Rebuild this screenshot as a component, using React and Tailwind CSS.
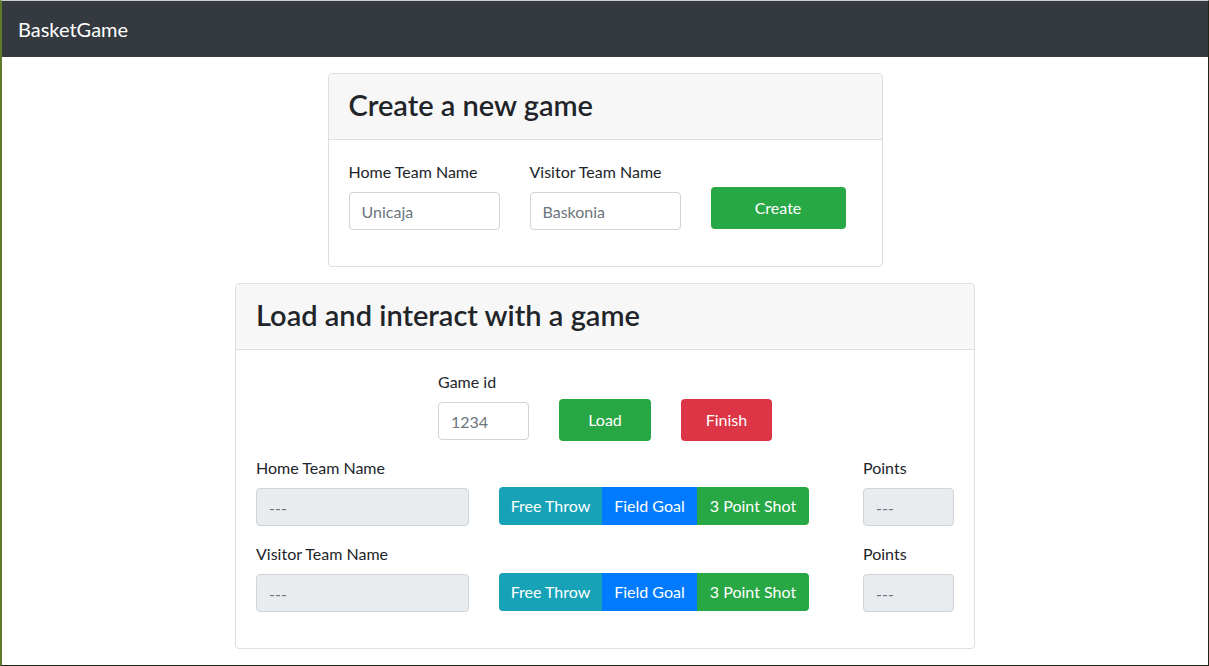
import React from 'react'

const FONT = { fontFamily: 'Lato, "Noto Sans", Arial, sans-serif' }

function Field({ label, placeholder, width, disabled }) {
  return (
    <div className="flex flex-col" style={{ width }}>
      <label className="mb-2 text-[16px] leading-6 text-[#212529]">{label}</label>
      <input
        disabled={disabled}
        placeholder={placeholder}
        className={
          'h-[38px] w-full rounded-[4px] border border-[#ced4da] px-3 text-[16px] outline-none placeholder:text-[#6c757d] ' +
          (disabled ? 'bg-[#e9ecef]' : 'bg-white')
        }
      />
    </div>
  )
}

function Card({ title, width, children }) {
  return (
    <div className="flex flex-col rounded-[4px] border border-[#dfdfdf] bg-white" style={{ width }}>
      <div className="rounded-t-[4px] border-b border-[#dfdfdf] bg-[#f7f7f7] px-5 pt-[14px] pb-[18px]">
        <h3 className="text-[29px] font-semibold leading-[33px] text-[#212529]">{title}</h3>
      </div>
      <div className="p-5">{children}</div>
    </div>
  )
}

function ShotGroup() {
  return (
    <div className="mt-[31px] flex h-[38px] text-[16px] text-white">
      <button className="w-[103px] rounded-l-[4px] bg-[#17a2b8]">Free Throw</button>
      <button className="w-[95px] bg-[#007bff]">Field Goal</button>
      <button className="w-[112px] rounded-r-[4px] bg-[#28a745]">3 Point Shot</button>
    </div>
  )
}

function TeamRow({ label }) {
  return (
    <div className="mb-4 flex">
      <Field label={label} placeholder="---" width={213} disabled />
      <div className="ml-[30px]">
        <ShotGroup />
      </div>
      <div className="ml-[54px]">
        <Field label="Points" placeholder="---" width={91} disabled />
      </div>
    </div>
  )
}

export default function App() {
  return (
    <div
      className="flex h-[666px] w-[1209px] flex-col overflow-hidden border-t border-r border-b border-l-2 border-t-[#cdcdcd] border-r-[#1e2418] border-b-[#1e2418] border-l-[#5f7a2a] bg-white"
      style={FONT}
    >
      <nav className="flex h-[56px] shrink-0 items-center bg-[#343a40] px-4">
        <span className="text-[20px] text-white">BasketGame</span>
      </nav>

      <div className="flex flex-col items-center gap-4 pt-4">
        <Card title="Create a new game" width={555}>
          <div className="mb-4 flex gap-[30px]">
            <Field label="Home Team Name" placeholder="Unicaja" width={151} />
            <Field label="Visitor Team Name" placeholder="Baskonia" width={151} />
            <button className="mt-[27px] h-[42px] w-[135px] rounded-[4px] bg-[#28a745] text-[16px] text-white">Create</button>
          </div>
        </Card>

        <Card title="Load and interact with a game" width={740}>
          <div className="mb-4 flex gap-[30px] pl-[182px]">
            <Field label="Game id" placeholder="1234" width={91} />
            <button className="-mb-px mt-[29px] h-[42px] w-[92px] rounded-[4px] bg-[#28a745] text-[16px] text-white">Load</button>
            <button className="-mb-px mt-[29px] h-[42px] w-[91px] rounded-[4px] bg-[#dc3545] text-[16px] text-white">Finish</button>
          </div>
          <TeamRow label="Home Team Name" />
          <TeamRow label="Visitor Team Name" />
        </Card>
      </div>
    </div>
  )
}
